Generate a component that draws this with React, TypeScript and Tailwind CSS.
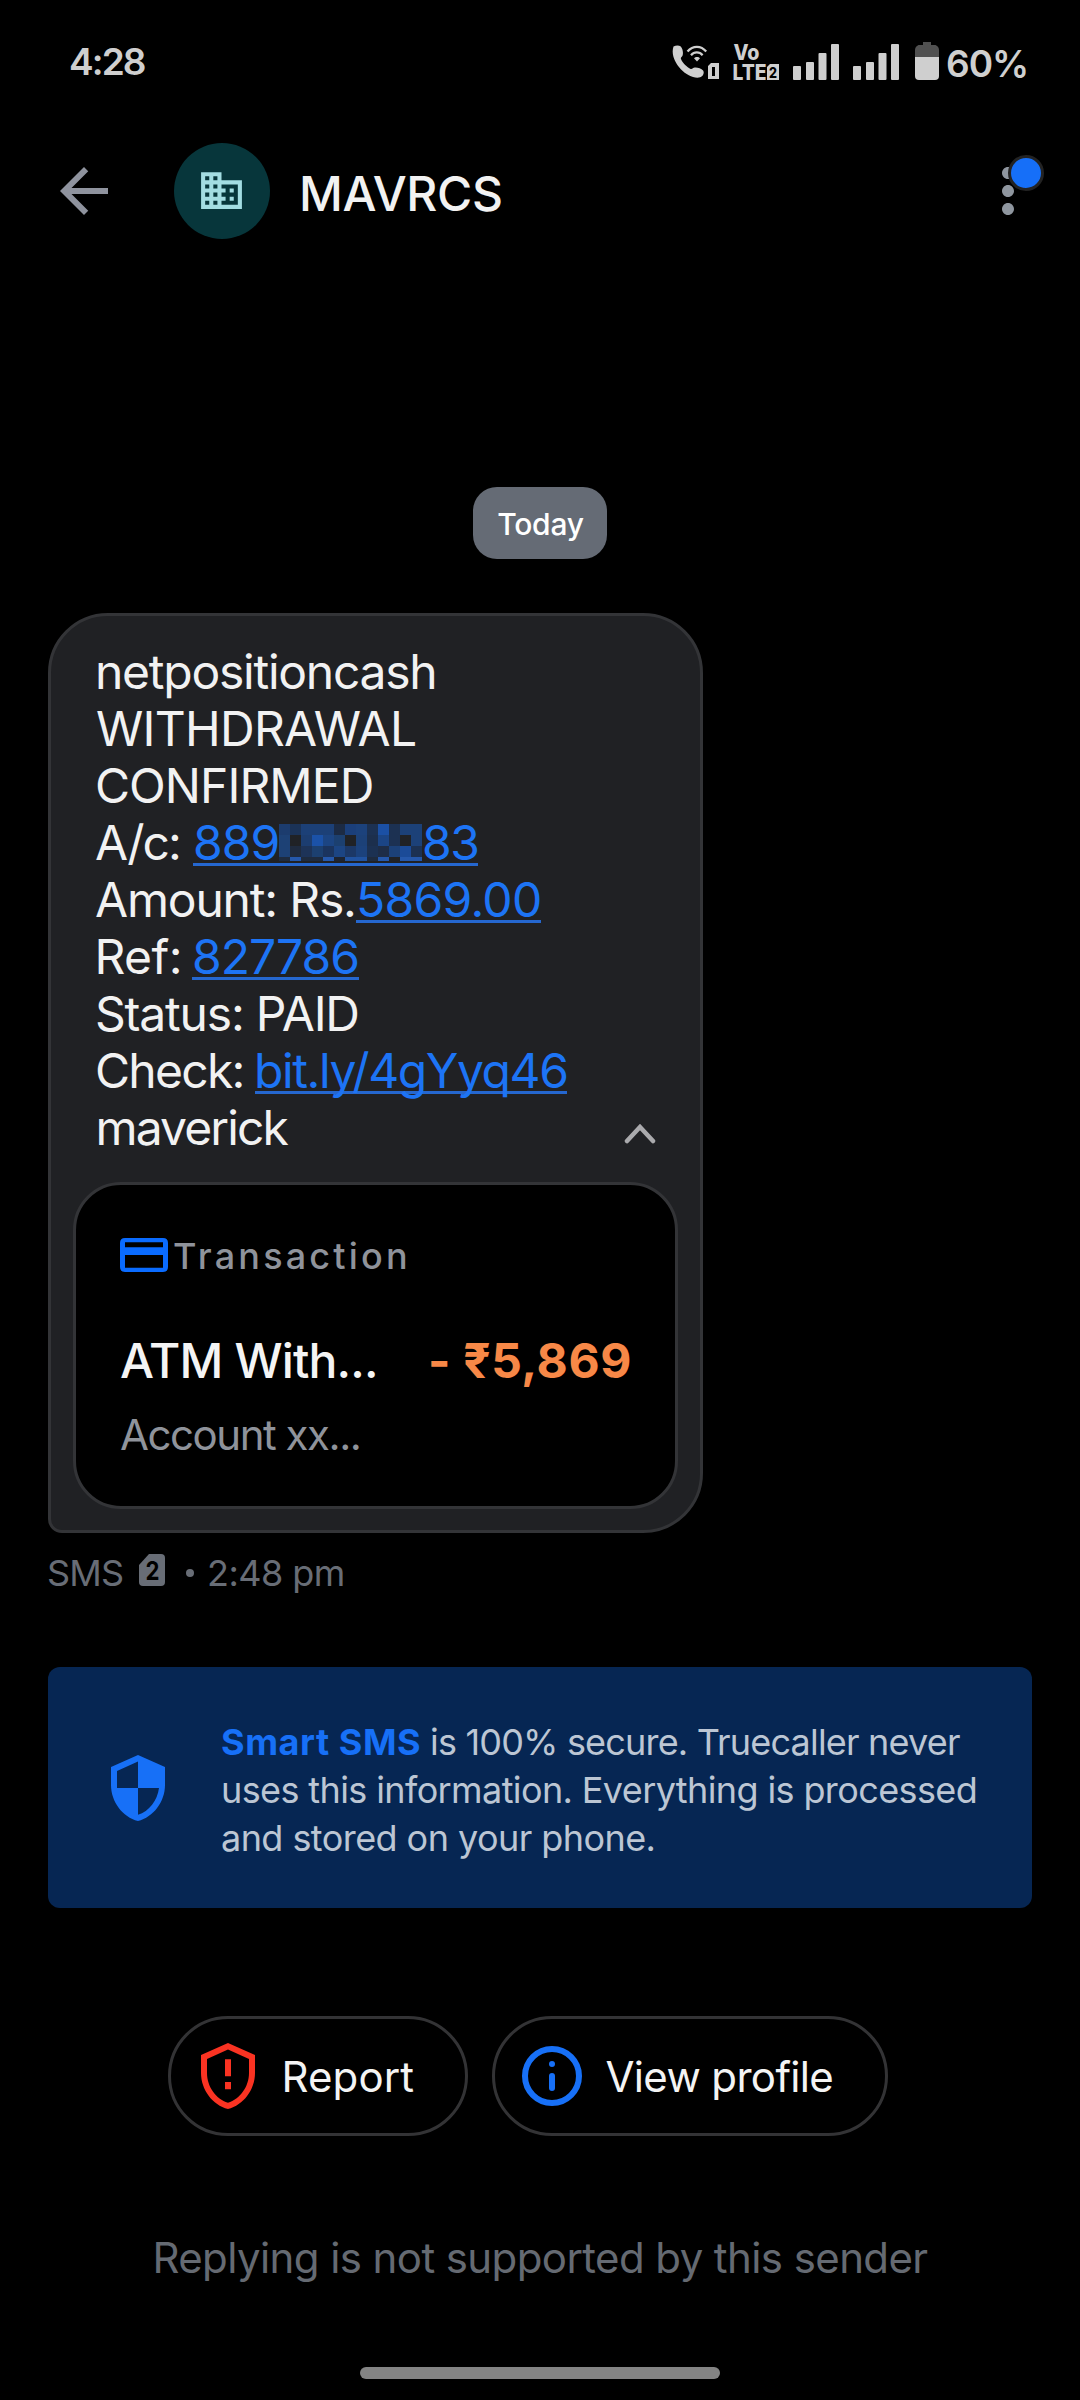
import type { ReactNode } from "react";
import { MdArrowBack, MdBusiness, MdMoreVert, MdSecurity } from "react-icons/md";

const MOSAIC = [
  "#1c3c6e", "#1b3358", "#1c4077", "#1c4077", "#1c4077", "#1c2b44", "#1b3f7a", "#1c427c", "#1c3152", "#1b50a5", "#1c3152", "#1c4178", "#1c4178",
  "#1d4175", "#202226", "#1c3d70", "#1b52a8", "#1c4583", "#1c4070", "#202226", "#1c4178", "#1c2f4d", "#1b4586", "#1c3152", "#202226", "#1c4178",
  "#1d4175", "#1f2b3f", "#1d3358", "#1c4070", "#1b345e", "#1c4583", "#1c3866", "#1c427c", "#1c3152", "#1e2d47", "#1c4178", "#1b4b98", "#1c3152",
  "#1e2b3f", "#2558ab", "#1e2b3f", "#1e2b3f", "#2558ab", "#1e2430", "#2153a0", "#2153a0", "#1e2b3f", "#2558ab", "#202226", "#2558ab", "#2558ab",
];

function Signal() {
  return (
    <svg width="48" height="40" viewBox="0 0 48 40" fill="currentColor">
      <rect x="1" y="24" width="8" height="14" rx="1" />
      <rect x="14" y="20" width="8" height="18" rx="1" />
      <rect x="26.500" y="11" width="8" height="27" rx="1" />
      <rect x="39" y="2" width="8" height="36" rx="1" />
    </svg>
  );
}

function StatusBar() {
  return (
    <div className="flex h-[124px] items-center pl-[69px] text-[37px] font-semibold leading-none text-[#cfcfcf]">
      <span className="-mt-[2px] w-[601px] tracking-[-1.900px]">4:28</span>
      <svg width="50" height="40" viewBox="0 0 50 40" fill="currentColor">
        <path d="M3.500 4.500c2.500-1.500 5.500-1.500 7.300 0 2 2.500 2.600 6.500 1.800 9.100-.5 1.200-2 1.800-1.700 3.200 1.200 3.700 6.300 8.700 9.800 10.200 1.500.5 2.400-1.400 4-1.400 2.700-.3 6.600 1 8.400 3 1.600 2-.1 5.800-2.900 6.700C17.500 38.500-1.500 18.500 3.500 4.500z" />
        <path d="M17.500 9.500c5.400-6.300 13.500-6.300 18.700 0M21 13.200c3.200-3.800 8.400-3.800 11.600 0" fill="none" stroke="currentColor" strokeWidth="2.200" />
        <path d="M24 16.300c1.500-1.800 4.600-1.800 6 0L27 19.500z" />
        <path fillRule="evenodd" d="M41 21h8v16H38V24zM42 25h3v9h-3z" />
      </svg>
      <svg className="ml-3 overflow-visible" width="50" height="40" viewBox="0 0 50 40" fill="currentColor">
        <text x="1.500" y="17.500" fontSize="21.500" fontWeight="800" textLength="26" lengthAdjust="spacingAndGlyphs">Vo</text>
        <text x="0.500" y="38" fontSize="21.500" fontWeight="800" textLength="34" lengthAdjust="spacingAndGlyphs">LTE</text>
        <path d="M38 22h9v16H35V25z" />
        <text x="37" y="35.500" fontSize="15" fontWeight="800" fill="#000" textLength="8" lengthAdjust="spacingAndGlyphs">2</text>
      </svg>
      <div className="ml-2.5 flex gap-3">
        <Signal />
        <Signal />
      </div>
      <svg className="ml-3.5" width="26" height="40" viewBox="0 0 26 40">
        <path d="M9 0h8v3h4.500Q25 4.500 25 8v7H1V8q0-3.500 3.500-5H9z" fill="#505050" />
        <path d="M1 15h24v19q0 4-4 4H5q-4 0-4-4z" fill="#cfcfcf" />
      </svg>
      <span className="ml-[6px] pt-[2px] font-semibold tracking-[-1px]">60%</span>
    </div>
  );
}

function Header() {
  return (
    <div className="flex h-[134px] items-center pl-12">
      <MdArrowBack size={72} color="#8f939e" />
      <div className="ml-[54px] flex size-24 items-center justify-center rounded-full bg-[#07363b] pb-px pr-px">
        <MdBusiness size={49} color="#a3dde2" />
      </div>
      <span className="ml-[29px] pt-[5px] text-[48px] font-medium leading-none tracking-[-0.350px] text-[#f2f2f2]">MAVRCS</span>
      <div className="relative ml-auto mr-9 text-[#8f969f]">
        <MdMoreVert size={72} />
        <span className="absolute left-[36px] top-0 size-9 rounded-full border-3 border-[#232323] bg-[#166ff8]" />
      </div>
    </div>
  );
}

function Line({ children }: { children: ReactNode }) {
  return <div className="flex h-[57px] items-start whitespace-pre">{children}</div>;
}

function Transaction() {
  return (
    <div className="mt-[26px] h-[327px] w-[605px] rounded-[48px] border-3 border-[#333437] bg-black pl-[44px] pr-[43px] pt-[47px]">
      <div className="flex h-12 items-center">
        <svg className="-mt-[2px]" width="48" height="34" viewBox="0 0 48 34">
          <path fill="#0a6bff" fillRule="evenodd" d="M5 0h38q5 0 5 5v24q0 5-5 5H5q-5 0-5-5V5q0-5 5-5zM5 4.300v5h38v-5zM5 17v12.700h38V17z" />
        </svg>
        <span className="ml-[5px] text-[36px] font-medium leading-none tracking-[3.200px] text-[#8f939b]">Transaction</span>
      </div>
      <div className="mt-[52px] flex h-[58px] items-center justify-between text-[48px] leading-none">
        <span className="font-medium tracking-[-0.850px] text-[#f4f4f4]">ATM With...</span>
        <span className="font-bold tracking-[0.600px] text-[#f78847]">- ₹5,869</span>
      </div>
      <div className="mt-5 h-[50px] text-[42px] leading-[50px] tracking-[-1.470px] text-[#8f939b]">Account xx...</div>
    </div>
  );
}

function Message() {
  return (
    <div className="ml-12 mt-[54px] h-[920px] w-[655px] rounded-[60px] rounded-bl-[14px] border-3 border-[#333437] bg-[#202124] pl-[22px] pt-[27px]">
      <div className="relative pl-[23px] text-[48px] leading-[57px] text-[#f2f2f2]">
        <Line><span className="-ml-[1px] tracking-[-1.250px]">netpositioncash</span></Line>
        <Line><span className="tracking-[-0.720px]">WITHDRAWAL</span></Line>
        <Line><span className="-ml-[1px] tracking-[-0.950px]">CONFIRMED</span></Line>
        <Line>
          <span className="-ml-[1px] w-[98px] tracking-[-1.900px]">A/c:</span>
          <a className="flex h-[52px] w-[285px] border-b-3 border-[#2567cf] text-[#1d74f5]">
            <span className="w-[86px] tracking-[-0.900px]">889</span>
            <span className="mt-[10px] grid h-[37px] grid-cols-[repeat(13,11px)] grid-rows-[11px_11px_11px_4px]">
              {MOSAIC.map((color, i) => (
                <span key={i} style={{ backgroundColor: color }} />
              ))}
            </span>
            <span className="tracking-[-1.500px]">83</span>
          </a>
        </Line>
        <Line>
          <span className="-ml-[1px] w-[261px] tracking-[-1.190px]">Amount: Rs.</span>
          <a className="h-[52px] w-[185px] border-b-3 border-[#2567cf] tracking-[-0.700px] text-[#1d74f5]">5869.00</a>
        </Line>
        <Line>
          <span className="-ml-[1.500px] w-[97.500px] tracking-[-0.600px]">Ref:</span>
          <a className="h-[52px] w-[167px] border-b-3 border-[#2567cf] tracking-[-1px] text-[#1d74f5]">827786</a>
        </Line>
        <Line><span className="-ml-[1px] tracking-[-1.200px]">Status: PAID</span></Line>
        <Line>
          <span className="-ml-[1px] w-[160px] tracking-[-1.740px]">Check:</span>
          <a className="h-[52px] w-[312px] border-b-3 border-[#2567cf] tracking-[-1.400px] text-[#1d74f5]">
            <span className="-ml-[1px]">bit.ly/4gYyq46</span>
          </a>
        </Line>
        <Line>
          <span className="-ml-[0.500px] tracking-[-1.880px]">maverick</span>
          <svg className="ml-auto mr-[43px] mt-[23px]" width="34" height="22" viewBox="0 0 34 22" fill="none" stroke="#aaaaad" strokeWidth="4.500">
            <path d="M4 19L17 5l13 14" strokeLinecap="round" />
          </svg>
        </Line>
      </div>
      <Transaction />
    </div>
  );
}

export default function App() {
  return (
    <div className="h-[2400px] w-[1080px] overflow-hidden bg-black font-['Inter',sans-serif]">
      <StatusBar />
      <Header />
      <div className="mx-auto mt-[229px] flex h-[72px] w-[134px] items-center justify-center rounded-[24px] bg-[#656b75] pl-px pt-[2px] text-[30px] font-medium leading-none tracking-[-0.200px] text-white">
        Today
      </div>
      <Message />
      <div className="ml-12 mt-[22px] flex h-9 items-center whitespace-pre text-[36px] leading-none text-[#686d76]">
        <span className="-ml-[1px] w-[92px] tracking-[-0.800px]">SMS</span>
        <svg className="-mt-[7px]" width="26" height="32" viewBox="0 0 26 32">
          <path d="M10 0h12q4 0 4 4v24q0 4-4 4H4q-4 0-4-4V11z" fill="#686d76" />
          <text x="6.500" y="26" fontSize="26" fontWeight="700" fill="#000" textLength="14" lengthAdjust="spacingAndGlyphs">2</text>
        </svg>
        <span className="ml-[21px] size-2 rounded-full bg-[#686d76]" />
        <span className="ml-[13px] tracking-[-0.550px]">2:48 pm</span>
      </div>
      <div className="mx-12 mt-[76px] flex h-[241px] items-center rounded-[12px] bg-[#062653] pl-[54px]">
        <MdSecurity size={72} color="#1770f7" />
        <div className="ml-[47px] mt-[4px] whitespace-nowrap text-[36px] leading-[48px] tracking-[-0.610px] text-[#bcc6d4]">
          <div className="flex">
            <span className="w-[209px] font-bold tracking-[0.560px] text-[#1770f7]">Smart SMS</span>
            <span className="tracking-[-0.810px]">is 100% secure. Truecaller never</span>
          </div>
          <div>uses this information. Everything is processed</div>
          <div className="tracking-[-0.560px]">and stored on your phone.</div>
        </div>
      </div>
      <div className="ml-[168px] mt-[108px] flex gap-6 text-[42px] leading-none text-[#f4f4f4]">
        <button className="flex h-[120px] w-[300px] items-center rounded-full border-3 border-[#333335] pl-[21px]">
          <svg width="72" height="72" viewBox="0 0 24 24" fill="#fa3322">
            <path d="M12 1L3 5v6c0 5.550 3.840 10.740 9 12 5.160-1.260 9-6.450 9-12V5l-9-4zm7 10c0 4.520-2.980 8.690-7 9.930-4.020-1.240-7-5.410-7-9.930V6.300l7-3.110 7 3.110V11z" />
            <path d="M11 6.400h2v5.700h-2zM11 14h2v2.400h-2z" />
          </svg>
          <span className="ml-[17.500px] pt-[2px] tracking-[0.100px]">Report</span>
        </button>
        <button className="flex h-[120px] w-[396px] items-center rounded-full border-3 border-[#333335] pl-[21px]">
          <svg width="72" height="72" viewBox="0 0 24 24" fill="#1770f7">
            <circle cx="12" cy="12" r="9" fill="none" stroke="#1770f7" strokeWidth="2" />
            <circle cx="12" cy="8" r="1" />
            <rect x="11" y="11" width="2" height="6" rx="1" />
          </svg>
          <span className="ml-[17.500px] pt-[2px] tracking-[-0.650px]">View profile</span>
        </button>
      </div>
      <div className="mt-[101px] h-[42px] text-center text-[42px] leading-[42px] tracking-[-0.590px] text-[#656a72]">
        Replying is not supported by this sender
      </div>
      <div className="mx-auto mt-[88px] h-3 w-[360px] rounded-full bg-[#848484]" />
    </div>
  );
}
